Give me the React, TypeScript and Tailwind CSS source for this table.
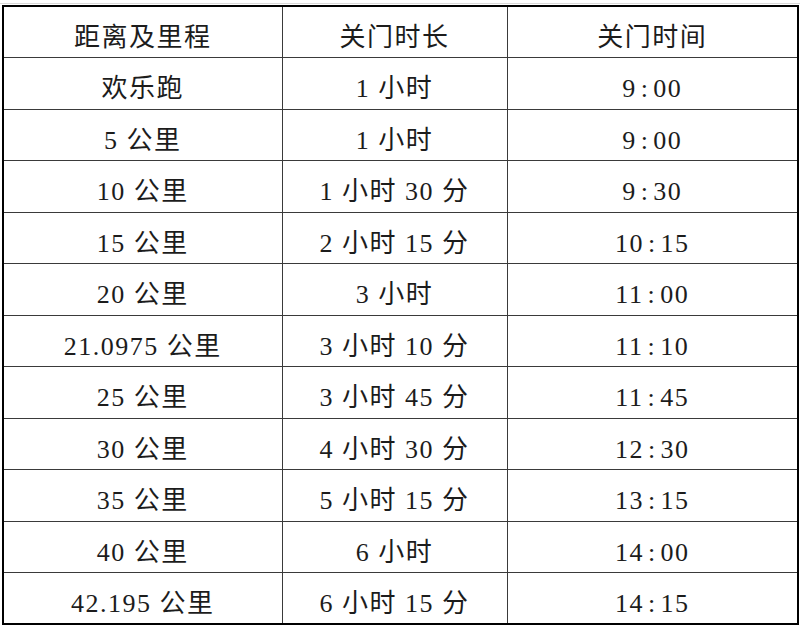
const rows: [string, string, string][] = [
  ["欢乐跑", "1 小时", "9:00"],
  ["5 公里", "1 小时", "9:00"],
  ["10 公里", "1 小时 30 分", "9:30"],
  ["15 公里", "2 小时 15 分", "10:15"],
  ["20 公里", "3 小时", "11:00"],
  ["21.0975 公里", "3 小时 10 分", "11:10"],
  ["25 公里", "3 小时 45 分", "11:45"],
  ["30 公里", "4 小时 30 分", "12:30"],
  ["35 公里", "5 小时 15 分", "13:15"],
  ["40 公里", "6 小时", "14:00"],
  ["42.195 公里", "6 小时 15 分", "14:15"],
];

// 时间里的冒号按全角宋体的宽度留白
function Time({ value }: { value: string }) {
  const [h, m] = value.split(":");
  return (
    <span>
      {h}
      <span className="px-[4px]">:</span>
      {m}
    </span>
  );
}

const cell = "border border-[#3a3a3a] text-center align-middle pt-[12px] leading-none";

export default function App() {
  return (
    <div
      className="w-[800px] h-[627px] bg-white text-[#1c1c1c] text-[26px] tracking-[1.5px]"
      style={{ fontFamily: '"Liberation Serif", "Noto Sans CJK SC", serif' }}
    >
      <div className="h-[3px]" />
      <div className="h-[1px] bg-[#d9d9d9]" />
      <div className="pl-[2px] pt-[1px]">
        <table className="border-collapse border-2 border-black table-fixed w-[795px]">
          <colgroup>
            <col className="w-[279px]" />
            <col className="w-[225px]" />
            <col className="w-[291px]" />
          </colgroup>
          <thead>
            <tr className="h-[51.5px]">
              <th className={`${cell} font-normal`}>距离及里程</th>
              <th className={`${cell} font-normal`}>关门时长</th>
              <th className={`${cell} font-normal`}>关门时间</th>
            </tr>
          </thead>
          <tbody>
            {rows.map(([dist, dur, time]) => (
              <tr key={dist} className="h-[51.5px]">
                <td className={cell}>{dist}</td>
                <td className={cell}>{dur}</td>
                <td className={cell}>
                  <Time value={time} />
                </td>
              </tr>
            ))}
          </tbody>
        </table>
      </div>
    </div>
  );
}
